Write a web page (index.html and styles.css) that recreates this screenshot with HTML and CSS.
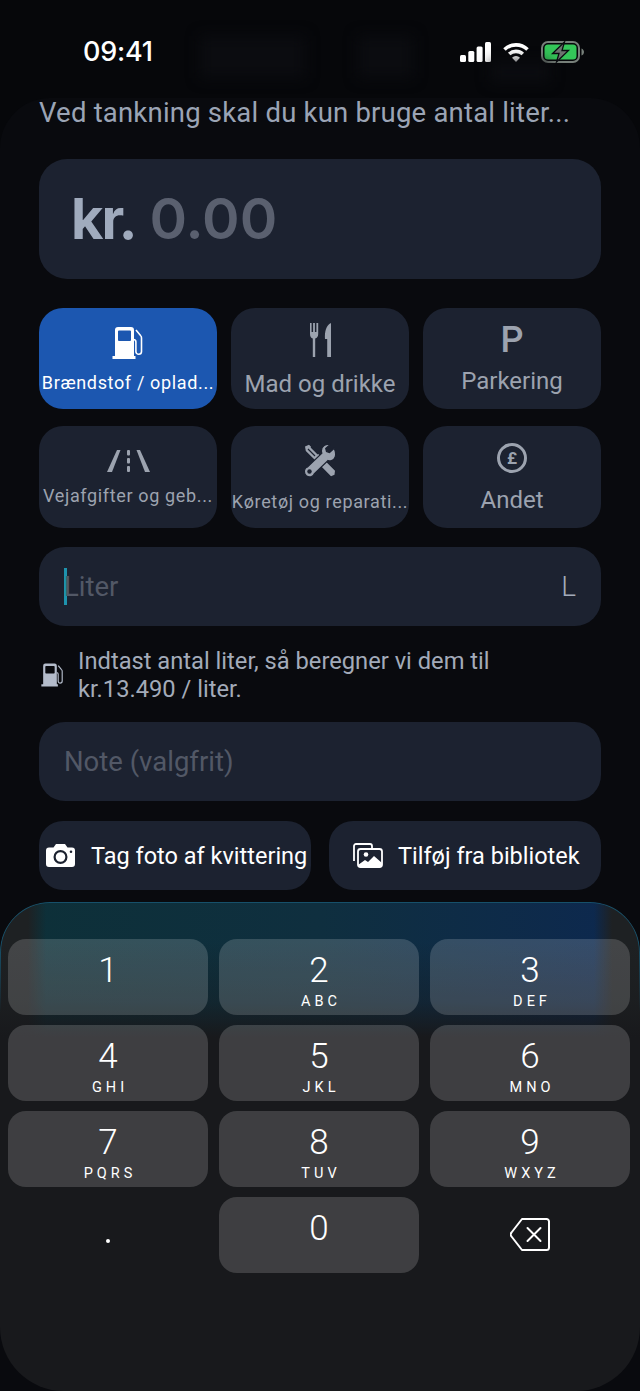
FILE: index.html
```html
<!DOCTYPE html>
<html lang="da">
<head>
  <meta charset="UTF-8">
  <title>Tilføj udgift</title>
  <link rel="stylesheet" href="styles.css">
</head>
<body>
  <div class="status">
    <div class="ghost g1"></div>
    <div class="ghost g2"></div>
    <div class="ghost g3"></div>
    <span class="time">09:41</span>
    <div class="status-icons">
      <svg width="31" height="20" viewBox="0 0 31 20" fill="#fff">
        <rect x="0" y="13" width="6" height="7" rx="1.5"/>
        <rect x="8.300" y="9" width="6" height="11" rx="1.500"/>
        <rect x="16.600" y="4.500" width="6" height="15.500" rx="1.500"/>
        <rect x="25" y="0" width="6" height="20" rx="1.500"/>
      </svg>
      <svg width="26" height="20" viewBox="0 0 26 20" fill="none" stroke="#fff" stroke-width="3.600">
        <path d="M1.500 7.500a16.500 16.500 0 0 1 23 0"/>
        <path d="M6.200 12a10 10 0 0 1 13.600 0"/>
        <path d="M13 20l-4-4.300a5.800 5.800 0 0 1 8 0z" fill="#fff" stroke="none"/>
      </svg>
      <svg width="43" height="22" viewBox="0 0 43 22">
        <rect x="1" y="1" width="37" height="20" rx="6" fill="none" stroke="#77807a" stroke-width="2"/>
        <rect x="3.500" y="3.500" width="32" height="15" rx="3.500" fill="#34c759"/>
        <path d="M40.500 7.500c1.500.5 2.500 2 2.500 3.500s-1 3-2.500 3.500z" fill="#77807a"/>
        <path d="M23.500 1L11.500 12.500h6.500L15.500 21l12-11.500H21z" fill="#6d7470" stroke="#0a0b10" stroke-width="1.300"/>
      </svg>
    </div>
  </div>

  <main class="screen">
    <p class="notice">Ved tankning skal du kun bruge antal liter...</p>

    <div class="amount"><b>kr.</b> <span>0.00</span></div>

    <div class="cats">
      <div class="cat active">
        <svg class="ic fuel" width="32" height="32" viewBox="0 0 32 32">
          <path fill="#fff" fill-rule="evenodd" d="M6 0h13a3 3 0 0 1 3 3v26h1.500v3H.500v-3H3V3a3 3 0 0 1 3-3zm1 3.500a1 1 0 0 0-1 1V13a1 1 0 0 0 1 1h11a1 1 0 0 0 1-1V4.500a1 1 0 0 0-1-1z"/>
          <path fill="none" stroke="#fff" stroke-width="1.600" d="M24 3l4.500 5.500a3 3 0 0 1 1 2.500v13.500a2.800 2.800 0 0 1-5.600 0V15a2.500 2.500 0 0 0-2-2.500"/>
        </svg>
        <span class="lbl small up1">Brændstof / oplad...</span>
      </div>
      <div class="cat">
        <svg class="ic food" width="21" height="34" viewBox="0 0 21 34" fill="#9ca3af">
          <path d="M0 0h1.600v9h1.500V0h1.800v9h1.500V0h1.800v11c0 2.500-1.200 4-3 4.600V34H2.800V15.600C1 15 0 13.500 0 11z"/>
          <path d="M15 16C14.500 9 16 2.500 21 0v34h-3.800V16z"/>
        </svg>
        <span class="lbl">Mad og drikke</span>
      </div>
      <div class="cat">
        <span class="ic letter">P</span>
        <span class="lbl up3">Parkering</span>
      </div>
      <div class="cat">
        <svg class="ic road" width="43" height="22" viewBox="0 0 43 22" fill="#9ca3af">
          <path d="M10 0h3.500L5 22H0z"/>
          <path d="M33 0h-3.500L38 22h5z"/>
          <rect x="20" y="0" width="3" height="5.500" rx="1"/>
          <rect x="20" y="8" width="3" height="5.500" rx="1"/>
          <rect x="20" y="16" width="3" height="6" rx="1"/>
        </svg>
        <span class="lbl small road-lbl">Vejafgifter og geb...</span>
      </div>
      <div class="cat">
        <svg class="ic tools" width="34" height="34" viewBox="0 0 34 34" fill="none" stroke="#9ca3af">
          <path d="M2 2.500L6 .800l14 14 12 12-.5 4-3.500 1.500L15 19 2.800 7z" fill="#9ca3af" stroke="none"/>
          <path d="M5 5l7 7M8 3l7 7" stroke="#1c2230" stroke-width="1.200"/>
          <path d="M31 4.500l-4.500 4-3-1-.8-3 4.200-3.800c-4-1.200-8.500 1.500-8.500 6 0 1 .2 1.800.5 2.500L4.500 23c-3.500 1-4 5.500-1.500 8.500 3 2.500 7.500 1.500 8.500-2l13.500-13c1 .5 2 .5 3 .3 4-.8 6-5.500 3.500-11.800z" fill="#9ca3af" stroke="#1c2230" stroke-width="1.200"/>
          <circle cx="6.500" cy="27.500" r="2.200" fill="#1c2230" stroke="none"/>
        </svg>
        <span class="lbl small car-lbl">Køretøj og reparati...</span>
      </div>
      <div class="cat">
        <span class="ic pound">£</span>
        <span class="lbl andet">Andet</span>
      </div>
    </div>

    <div class="field liter">
      <i class="caret"></i>
      <span class="ph">Liter</span>
      <span class="unit">L</span>
    </div>

    <div class="info">
      <svg width="23" height="24" viewBox="0 0 32 32">
        <path fill="#b4bccb" fill-rule="evenodd" d="M6 0h13a3 3 0 0 1 3 3v26h1.500v3H.500v-3H3V3a3 3 0 0 1 3-3zm1 3.500a1 1 0 0 0-1 1V13a1 1 0 0 0 1 1h11a1 1 0 0 0 1-1V4.500a1 1 0 0 0-1-1z"/>
        <path fill="none" stroke="#b4bccb" stroke-width="1.600" d="M24 3l4.500 5.500a3 3 0 0 1 1 2.500v13.500a2.800 2.800 0 0 1-5.600 0V15a2.500 2.500 0 0 0-2-2.500"/>
      </svg>
      <p>Indtast antal liter, så beregner vi dem til<br>kr.13.490 / liter.</p>
    </div>

    <div class="field note"><span class="ph">Note (valgfrit)</span></div>

    <div class="actions">
      <div class="action cam">
        <svg width="29" height="23" viewBox="0 0 29 23">
          <path fill="#fff" fill-rule="evenodd" d="M10 0h9l2.500 3.500H26a3 3 0 0 1 3 3V20a3 3 0 0 1-3 3H3a3 3 0 0 1-3-3V6.500a3 3 0 0 1 3-3h4.500zM14.500 6a7 7 0 1 0 0 14 7 7 0 0 0 0-14zm0 2.200a4.800 4.800 0 1 1 0 9.600 4.800 4.800 0 0 1 0-9.600zM25 6.500a1.300 1.300 0 1 0 0 2.600 1.300 1.300 0 0 0 0-2.600z"/>
        </svg>
        <span>Tag foto af kvittering</span>
      </div>
      <div class="action lib">
        <svg width="30" height="25" viewBox="0 0 30 25" fill="none" stroke="#fff" stroke-width="1.800">
          <path d="M1 18V3a2 2 0 0 1 2-2h14a2 2 0 0 1 2 2v2"/>
          <rect x="5" y="6" width="24" height="18" rx="2.500"/>
          <circle cx="13" cy="11.500" r="2.300" fill="#fff" stroke="none"/>
          <path d="M5 22l7-5 3 2 6-6 8 7v2.500a1.500 1.500 0 0 1-1.500 1.500h-21A1.500 1.500 0 0 1 5 22.500z" fill="#fff" stroke="none"/>
        </svg>
        <span>Tilføj fra bibliotek</span>
      </div>
    </div>

    <section class="sheet">
      <div class="keys">
        <div class="key"><b>1</b></div>
        <div class="key"><b>2</b><small>ABC</small></div>
        <div class="key"><b>3</b><small>DEF</small></div>
        <div class="key"><b>4</b><small>GHI</small></div>
        <div class="key"><b>5</b><small>JKL</small></div>
        <div class="key"><b>6</b><small>MNO</small></div>
        <div class="key"><b>7</b><small>PQRS</small></div>
        <div class="key"><b>8</b><small>TUV</small></div>
        <div class="key"><b>9</b><small>WXYZ</small></div>
        <div class="key plain dot"><i></i></div>
        <div class="key"><b>0</b></div>
        <div class="key plain back">
          <svg width="40" height="33" viewBox="0 0 40 33" fill="none" stroke="#fff" stroke-width="2" stroke-linejoin="round">
            <path d="M12 1h24.500a2.500 2.500 0 0 1 2.500 2.500v26a2.500 2.500 0 0 1-2.500 2.500H12L1.500 18.500a3 3 0 0 1 0-4z"/>
            <path d="M17.500 10l13 13M30.500 10l-13 13" stroke-linecap="round"/>
          </svg>
        </div>
      </div>
    </section>
  </main>
</body>
</html>
```

FILE: styles.css
```css
* {
  box-sizing: border-box;
}
html, body {
  margin: 0;
  height: 1391px;
  overflow: hidden;
}
body {
  background: #06070a;
  font-family: 'Roboto', 'Liberation Sans', sans-serif;
  color: #fff;
}
p {
  margin: 0;
}

/* status bar */
.status {
  position: relative;
  height: 98px;
  padding: 0 56px 0 83px;
  display: flex;
  align-items: flex-start;
  justify-content: space-between;
}
.time {
  margin-top: 36px;
  font-family: 'Inter', sans-serif;
  font-size: 27px;
  line-height: 32px;
  font-weight: 500;
  letter-spacing: -0.2px;
}
.status-icons {
  margin-top: 41px;
  display: flex;
  align-items: center;
  gap: 12px;
}
.ghost {
  position: absolute;
  top: 36px;
  height: 42px;
  background: #0b0c10;
  filter: blur(7px);
}
.g1 { left: 200px; width: 105px; }
.g2 { left: 358px; width: 55px; }
.g3 { left: 490px; width: 60px; top: 62px; height: 20px; }

/* main */
.screen {
  background: #090a0e;
  border-radius: 50px 50px 0 0;
  padding: 0 39px;
  height: 1293px;
}
.notice {
  font-size: 27.500px;
  line-height: 30px;
  letter-spacing: 0.2px;
  color: #9ba4b5;
  white-space: nowrap;
}
.amount {
  margin-top: 31px;
  height: 120px;
  background: #1c2230;
  border-radius: 28px;
  padding-left: 32px;
  display: flex;
  align-items: center;
  gap: 14px;
  font-family: 'Inter', sans-serif;
  font-size: 56px;
  line-height: 120px;
}
.amount b {
  color: #a0abbd;
  font-weight: 700;
  letter-spacing: -2px;
}
.amount span {
  color: #5a606f;
  font-size: 57px;
  font-weight: 600;
}

.cats {
  margin-top: 29px;
  display: grid;
  grid-template-columns: repeat(3, 178px);
  grid-template-rows: 101px 102px;
  justify-content: space-between;
  row-gap: 17px;
}
.cat {
  background: #1c2230;
  border-radius: 24px;
  display: flex;
  flex-direction: column;
  align-items: center;
  color: #9ca3af;
  overflow: hidden;
  padding-top: 15px;
}
.cat.active {
  background: #1c57b0;
  color: #fff;
}
.ic {
  height: 34px;
  flex: none;
}
.fuel {
  margin-top: 4px;
  height: 32px;
}
.lbl {
  margin-top: 12px;
  font-size: 24px;
  line-height: 30px;
  white-space: nowrap;
}
.lbl.small {
  font-size: 18px;
  letter-spacing: 0.65px;
}
.up1 { margin-top: 9px; }
.up3 { margin-top: 9px; }
.letter {
  margin-top: 0;
  font-size: 36px;
  line-height: 34px;
  font-weight: 500;
}
.food { margin-top: 0; }
.road {
  margin-top: 9px;
  height: 22px;
}
.road-lbl { margin-top: 9px; }
.tools { margin-top: 3px; }
.car-lbl { margin-top: 9px; }
.pound {
  margin-top: 2px;
  width: 30px;
  height: 30px;
  border: 3px solid #9ca3af;
  border-radius: 50%;
  display: flex;
  align-items: center;
  justify-content: center;
  font-size: 17px;
  font-weight: 700;
}
.andet { margin-top: 12px; }

.field {
  height: 79px;
  background: #1c2230;
  border-radius: 26px;
  padding: 0 25px;
  display: flex;
  align-items: center;
  font-size: 27.500px;
}
.ph {
  color: #525866;
}
.liter {
  margin-top: 19px;
}
.caret {
  width: 3px;
  height: 37px;
  margin-right: -3px;
  background: #1e93ad;
}
.unit {
  margin-left: auto;
  color: #a3abb9;
  font-size: 28px;
  font-weight: 300;
}
.info {
  margin-top: 21px;
  display: flex;
  align-items: center;
  gap: 14px;
  font-size: 23.700px;
  line-height: 28px;
  color: #a3abb9;
  padding-left: 2px;
}
.note {
  margin-top: 19px;
}

.actions {
  margin-top: 20px;
  display: grid;
  grid-template-columns: 272px 272px;
  justify-content: space-between;
}
.action {
  height: 69px;
  background: #1c2230;
  border-radius: 24px;
  display: flex;
  align-items: center;
  font-size: 23.500px;
  color: #fff;
  white-space: nowrap;
}
.action svg {
  flex: none;
}
.cam {
  padding-left: 7px;
  gap: 16px;
}
.lib {
  padding-left: 24px;
  gap: 15px;
}

/* number pad */
.sheet {
  position: relative;
  margin: 12px -39px 0;
  height: 489px;
  padding: 37px 10px 0 8px;
  border-radius: 50px 50px 64px 64px;
  background:
    linear-gradient(180deg, rgba(24, 25, 28, 0) 40px, rgba(24, 25, 28, 0.4) 100px, #18191c 135px),
    linear-gradient(90deg, #1e2123 0, #1e2123 28px, rgba(30, 33, 35, 0) 46px, rgba(30, 33, 35, 0) 594px, #1e2123 612px),
    linear-gradient(90deg, #0d3038, #0f2f3f 50%, #0d2850);
}
/* thin lit edge along the top of the sheet */
.sheet::before {
  content: "";
  position: absolute;
  left: 0;
  right: 0;
  top: 0;
  height: 110px;
  border: 1px solid #16506a;
  border-bottom: 0;
  border-radius: 50px 50px 0 0;
  -webkit-mask-image: linear-gradient(180deg, #000 40%, transparent);
  mask-image: linear-gradient(180deg, #000 40%, transparent);
}
.keys {
  display: grid;
  grid-template-columns: repeat(3, 1fr);
  grid-auto-rows: 76px;
  gap: 10px 11px;
}
.key {
  background: rgba(255, 255, 255, 0.165);
  border-radius: 18px;
  text-align: center;
  padding-top: 12px;
}
.key b {
  display: block;
  font-size: 35px;
  line-height: 40px;
  font-weight: 300;
}
.key small {
  display: block;
  margin-top: 2px;
  font-size: 14.500px;
  line-height: 18px;
  letter-spacing: 4px;
  padding-left: 4px;
}
.key.plain {
  background: none;
}
.dot i {
  display: block;
  width: 4px;
  height: 4px;
  margin: 30px auto 0;
  border-radius: 50%;
  background: #fff;
}
.back {
  padding-top: 21px;
}
```
